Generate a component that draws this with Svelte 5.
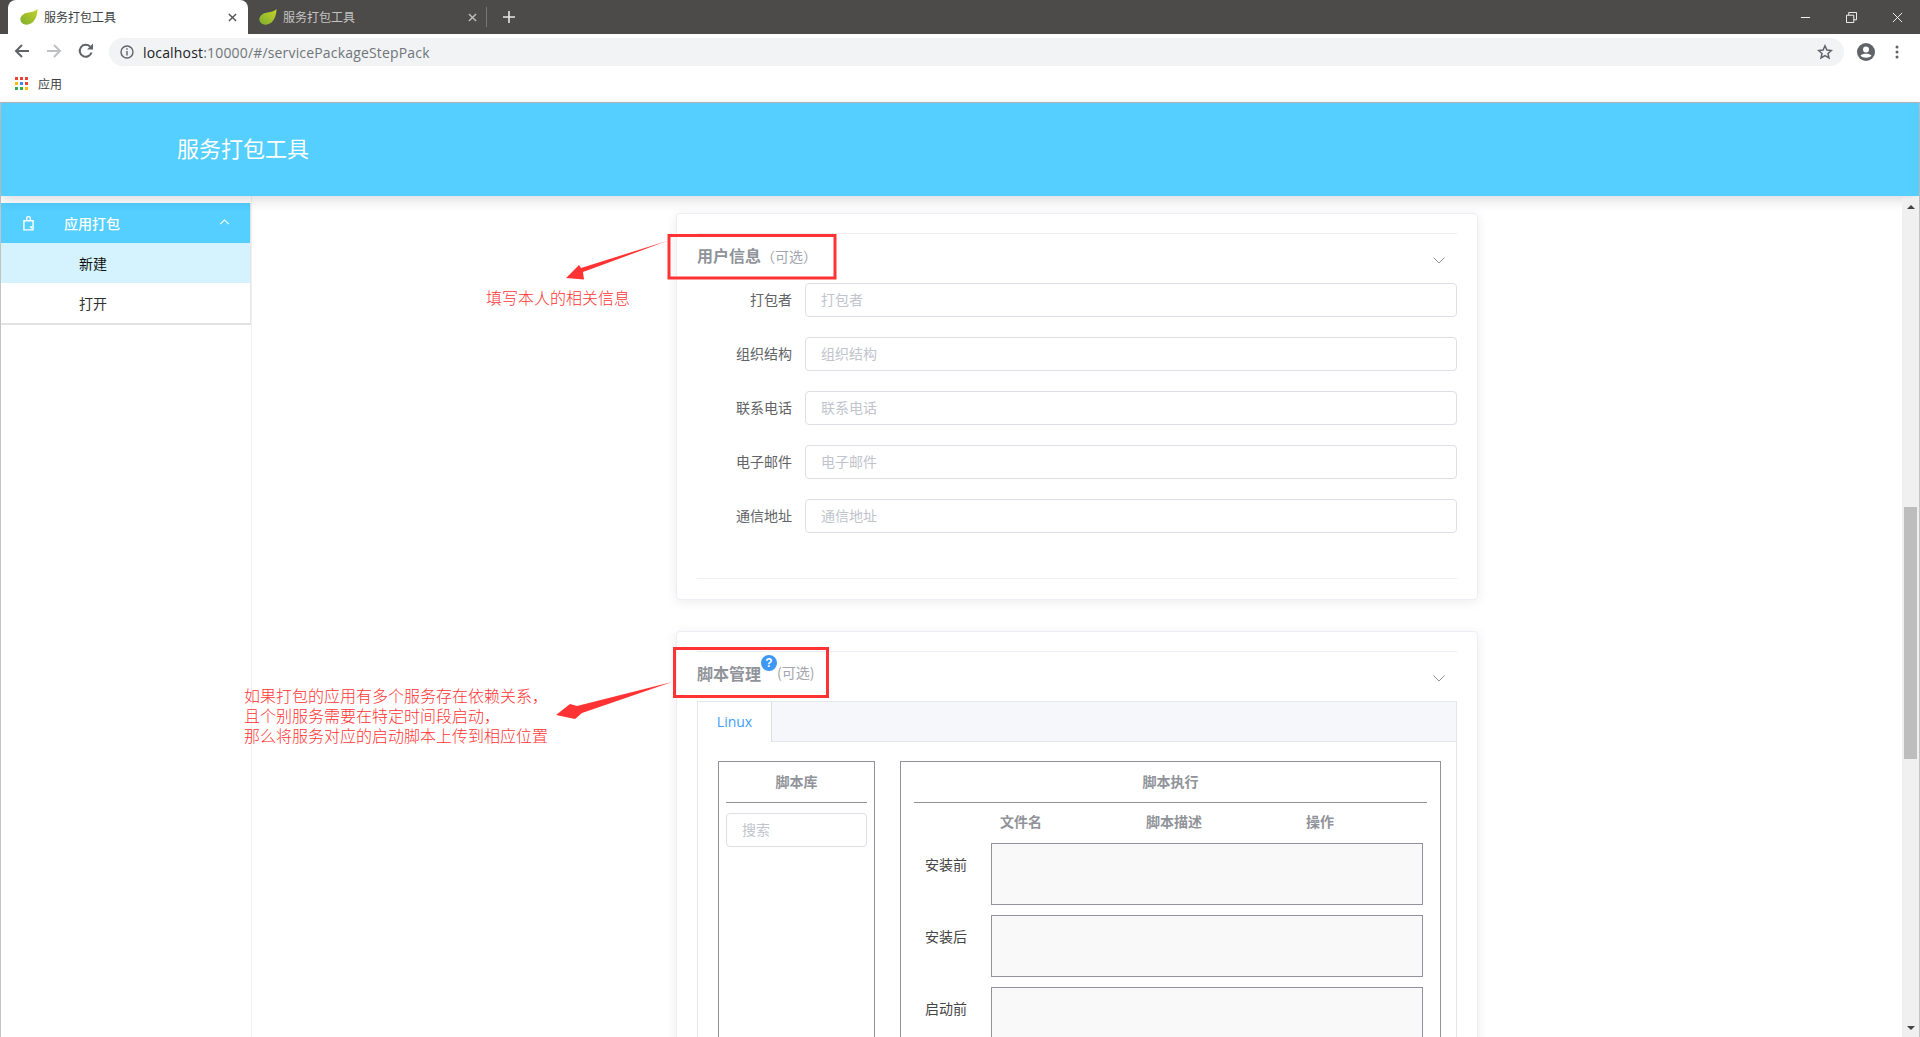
<script>
  const userFields = ['打包者', '组织结构', '联系电话', '电子邮件', '通信地址'];
  const stages = ['安装前', '安装后', '启动前'];
  const apps = ['#ea4335','#ea4335','#ea4335','#fbbc04','#4285f4','#ea4335','#34a853','#34a853','#fbbc04'];
</script>

<div class="window">
  <div class="tabstrip">
    <div class="tab active">
      <svg class="leaf" viewBox="0 0 18 16"><defs><linearGradient id="lf" x1="0" y1="1" x2="1" y2="0"><stop offset="0" stop-color="#7fae2e"/><stop offset="1" stop-color="#c4d32a"/></linearGradient></defs><path d="M17.500 0C13 5 4 1 .5 9c-1 4 3 7.500 7.500 6.500 6.500-1 9.500-8.500 9.500-15.500z" fill="url(#lf)"/></svg>
      <span class="tabtitle">服务打包工具</span>
      <svg class="tabx" viewBox="0 0 10 10"><path d="M1 1l8 8M9 1l-8 8" stroke="#555" stroke-width="1.6"/></svg>
    </div>
    <div class="tab second-tab">
      <svg class="leaf" viewBox="0 0 18 16"><path d="M17.500 0C13 5 4 1 .5 9c-1 4 3 7.500 7.500 6.500 6.500-1 9.500-8.500 9.500-15.500z" fill="url(#lf)"/></svg>
      <span class="tabtitle dim">服务打包工具</span>
      <svg class="tabx" viewBox="0 0 10 10"><path d="M1 1l8 8M9 1l-8 8" stroke="#bdbdbd" stroke-width="1.6"/></svg>
    </div>
    <div class="tabsep"></div>
    <svg class="plus" viewBox="0 0 12 12"><path d="M6 0v12M0 6h12" stroke="#e8e8e8" stroke-width="1.6"/></svg>
    <div class="winbtns">
      <svg viewBox="0 0 12 12"><path d="M1 6h10" stroke="#fff"/></svg>
      <svg viewBox="0 0 12 12"><path d="M.5 3.500h8v8h-8zM3 3.500V.5h8.500v8h-3" stroke="#fff" fill="none"/></svg>
      <svg viewBox="0 0 12 12"><path d="M1 1l10 10M11 1L1 11" stroke="#fff"/></svg>
    </div>
  </div>

  <div class="toolbar">
    <svg class="nav" viewBox="0 0 16 16"><path d="M15 8H2M8 2L2 8l6 6" stroke="#5f6368" stroke-width="2" fill="none"/></svg>
    <svg class="nav" viewBox="0 0 16 16"><path d="M1 8h13M8 2l6 6-6 6" stroke="#bdc1c6" stroke-width="2" fill="none"/></svg>
    <svg class="nav" viewBox="0 0 16 16"><path d="M13.500 9.500A6 6 0 1 1 12 3.500" stroke="#5f6368" stroke-width="2" fill="none"/><path d="M9 6.500h6V.5z" fill="#5f6368"/></svg>
    <div class="omnibox">
      <svg class="info" viewBox="0 0 14 14"><circle cx="7" cy="7" r="6" stroke="#5f6368" stroke-width="1.400" fill="none"/><path d="M7 6v4.500M7 3.300v1.500" stroke="#5f6368" stroke-width="1.400"/></svg>
      <span class="url"><span class="host">localhost</span>:10000/#/servicePackageStepPack</span>
      <svg class="star" viewBox="0 0 16 16"><path d="M8 1.800l1.900 4.200 4.500.5-3.400 3 1 4.500L8 11.700 4 14l1-4.500-3.400-3 4.500-.5z" stroke="#5f6368" stroke-width="1.500" fill="none"/></svg>
    </div>
    <svg class="profile" viewBox="0 0 18 18"><circle cx="9" cy="9" r="9" fill="#5f6368"/><circle cx="9" cy="6.500" r="3" fill="#fff"/><path d="M3.500 12.500c2-2.500 9-2.500 11 0-2 3-9 3-11 0z" fill="#fff"/></svg>
    <svg class="dots" viewBox="0 0 4 14"><circle cx="2" cy="2" r="1.500" fill="#5f6368"/><circle cx="2" cy="7" r="1.500" fill="#5f6368"/><circle cx="2" cy="12" r="1.500" fill="#5f6368"/></svg>
  </div>

  <div class="bookmarks">
    <div class="apps">{#each apps as c}<i style="background:{c}"></i>{/each}</div>
    <span>应用</span>
  </div>

  <div class="site">
    <header class="banner"><h1>服务打包工具</h1></header>
    <div class="layout">
      <aside class="sidebar">
        <nav class="menu">
          <div class="menuhead">
            <svg class="bag" viewBox="0 0 12 16"><path d="M1 5h10v10H1zM4 5V2.500a2 2 0 0 1 4 0V5" stroke="#fff" stroke-width="1.500" fill="none"/><path d="M7 11l2 3 2-3z" fill="#fff"/></svg>
            <span>应用打包</span>
            <svg class="up" viewBox="0 0 12 7"><path d="M1 6l5-5 5 5" stroke="#fff" stroke-width="1.200" fill="none"/></svg>
          </div>
          <div class="item selected">新建</div>
          <div class="item">打开</div>
        </nav>
      </aside>

      <main class="content">
        <section class="card first">
          <div class="collapse-head">
            <span class="ctitle">用户信息</span><span class="opt">（可选）</span>
            <svg class="chev" viewBox="0 0 12 7"><path d="M.5.5l5.500 5.500L11.500.5" stroke="#909399" fill="none"/></svg>
          </div>
          <form class="form">
            {#each userFields as f}
              <div class="row">
                <span class="lab">{f}</span>
                <div class="input"><span>{f}</span></div>
              </div>
            {/each}
          </form>
        </section>

        <section class="card">
          <div class="collapse-head">
            <span class="ctitle">脚本管理</span>
            <span class="help">?</span>
            <span class="opt second">(可选)</span>
            <svg class="chev" viewBox="0 0 12 7"><path d="M.5.5l5.500 5.500L11.500.5" stroke="#909399" fill="none"/></svg>
          </div>
          <div class="tabs">
            <div class="tabbar"><div class="tabitem">Linux</div></div>
            <div class="tabbody">
              <div class="lib">
                <div class="boxtitle">脚本库</div>
                <div class="input search"><span>搜索</span></div>
              </div>
              <div class="exec">
                <div class="boxtitle">脚本执行</div>
                <div class="cols">
                  <span class="c1">文件名</span><span class="c2">脚本描述</span><span class="c3">操作</span>
                </div>
                {#each stages as s}
                  <div class="stage">
                    <span>{s}</span>
                    <div class="drop"></div>
                  </div>
                {/each}
              </div>
            </div>
          </div>
        </section>
      </main>

      <div class="scrollbar">
        <svg viewBox="0 0 8 4"><path d="M0 4L4 0l4 4z" fill="#444"/></svg>
        <div class="track"><div class="thumb"></div></div>
        <svg viewBox="0 0 8 4"><path d="M0 0l4 4 4-4z" fill="#444"/></svg>
      </div>
    </div>
  </div>

  <svg class="marks" viewBox="0 0 1920 1037">
    <rect x="669" y="235.500" width="166" height="42.500" />
    <rect x="674.500" y="648.500" width="153" height="48" />
    <path class="arrow" d="M667 241L583 272L584 279.500L566 278L579 265L581 268Z"/>
    <path class="arrow" d="M672 682L582 713L575 719L556 715L570 704L577 706Z"/>
  </svg>
  <div class="note one">填写本人的相关信息</div>
  <div class="note two">
    <div>如果打包的应用有多个服务存在依赖关系，</div>
    <div>且个别服务需要在特定时间段启动，</div>
    <div>那么将服务对应的启动脚本上传到相应位置</div>
  </div>
</div>

<style>
  :global(body) { margin: 0; }
  .window {
    position: relative; height: 100vh; overflow: hidden; display: flex; flex-direction: column;
    background: #fff; color: #606266;
    font-family: "Noto Sans CJK SC", "Noto Sans", sans-serif; font-size: 14px;
  }
  .tabstrip { height: 34px; background: #4d4b49; display: flex; align-items: stretch; flex: none; padding-left: 8px; }
  .tab { width: 240px; display: flex; align-items: center; box-sizing: border-box; padding-left: 12px; padding-right: 11px; }
  .tab.second-tab { padding-left: 11px; }
  .tab.active { background: #fff; border-radius: 8px 8px 0 0; }
  .leaf { width: 18px; height: 16px; flex: none; margin-right: 6px; margin-bottom: 1px; }
  .tabtitle { font-size: 12px; color: #3c4043; flex: 1; padding-bottom: 2px; }
  .tabtitle.dim { color: #c4c4c4; }
  .tabx { width: 9px; height: 9px; }
  .tabsep { width: 1px; height: 20px; background: #777; align-self: center; margin-left: -2px; }
  .plus { width: 12px; height: 12px; align-self: center; margin-left: 16px; }
  .winbtns { margin-left: auto; display: flex; align-items: center; gap: 35px; padding-right: 17px; }
  .winbtns svg { width: 11px; height: 11px; }

  .toolbar { height: 34px; flex: none; display: flex; align-items: center; padding-left: 14px; }
  .nav { width: 16px; height: 16px; margin-right: 16px; }
  .omnibox { margin-left: 1px; width: 1735px; height: 28px; margin-top: 2px; background: #f1f3f4; border-radius: 14px; display: flex; align-items: center; box-sizing: border-box; padding-left: 11px; padding-right: 11px; }
  .info { width: 14px; height: 14px; margin-right: 9px; }
  .url { font-family: "Open Sans", sans-serif; font-size: 14px; color: #70757a; flex: 1; letter-spacing: 0.17px; }
  .host { color: #202124; }
  .star { width: 16px; height: 16px; }
  .toolbar > .nav:nth-child(3) { margin-right: 14px; }
  .profile { width: 18px; height: 18px; margin: 2px 0 0 13px; }
  .dots { width: 4px; height: 14px; margin: 2px 0 0 20px; }

  .bookmarks { height: 31px; padding-bottom: 3px; box-sizing: content-box; flex: none; display: flex; align-items: center; padding-left: 15px; border-bottom: 1px solid #b8b8b8; font-size: 12px; color: #3c4043; }
  .apps { width: 13px; display: grid; grid-template-columns: repeat(3, 3px); gap: 2px; margin-right: 10px; }
  .apps i { width: 3px; height: 3px; display: block; }

  .site { flex: 1; min-height: 0; display: flex; flex-direction: column; border-left: 1px solid #c4c4c4; border-right: 1px solid #c4c4c4; }
  .banner { height: 93px; box-sizing: border-box; padding-bottom: 5px; flex: none; background: #54cfff; box-shadow: 0 4px 12px rgba(0,0,0,.14); position: relative; z-index: 2; display: flex; align-items: center; padding-left: 176px; }
  h1 { margin: 0; font-size: 22px; font-weight: 400; color: #fff; }

  .layout { flex: 1; min-height: 0; display: flex; }
  .sidebar { width: 250px; flex: none; border-right: 1px solid #f0f0f2; padding-top: 7px; box-sizing: content-box; }
  .menu { border-bottom: 2px solid #e2e2e2; border-right: 1px solid #e6e6e6; }
  .menuhead { height: 40px; background: #54cfff; color: #fff; display: flex; align-items: center; position: relative; padding-left: 63px; font-weight: 500; }
  .bag { width: 11px; height: 15px; position: absolute; left: 22px; top: 13px; }
  .up { width: 11px; height: 6px; position: absolute; left: 218px; top: 16px; }
  .item { height: 40px; line-height: 40px; padding-left: 78px; color: #303133; }
  .item.selected { background: #d4f3ff; color: #111; }

  .content { flex: 1; padding: 17px 0 0 424px; box-sizing: border-box; min-width: 0; }
  .card { width: 802px; box-sizing: border-box; border: 1px solid #ebeef5; border-radius: 4px; box-shadow: 0 2px 12px rgba(0,0,0,.08); padding: 19px 20px 20px; background: #fff; margin-bottom: 31px; }
  .collapse-head { height: 49px; border-top: 1px solid #ebeef5; position: relative; display: flex; align-items: center; box-sizing: content-box; }
  .ctitle { font-size: 16px; font-weight: 700; color: #909399; margin-bottom: 8px; }
  .opt { font-size: 14px; color: #a3a6ad; margin-bottom: 6px; }
  .opt.second { margin-bottom: 9px; }
  .help { width: 16px; height: 16px; border-radius: 50%; background: #3e97f5; color: #fff; font-size: 12px; font-weight: 700; text-align: center; line-height: 16px; margin: -28px 0 0 0; font-family: "Liberation Sans", sans-serif; }
  .chev { width: 12px; height: 7px; position: absolute; right: 12px; top: 23px; }

  .form { padding-bottom: 25px; border-bottom: 1px solid #ebeef5; }
  .row { display: flex; align-items: center; height: 34px; margin-bottom: 20px; }
  .lab { width: 95px; text-align: right; margin-right: 13px; color: #606266; padding-bottom: 2px; }
  .input { flex: 1; height: 34px; box-sizing: border-box; border: 1px solid #dcdfe6; border-radius: 4px; display: flex; align-items: center; padding-left: 15px; padding-bottom: 2px; color: #c0c4cc; }

  .tabs { border: 1px solid #e4e7ed; border-bottom: 0; }
  .tabbar { height: 39px; background: #f5f7fa; border-bottom: 1px solid #e4e7ed; }
  .tabitem { width: 74px; height: 40px; box-sizing: border-box; background: #fff; border-right: 1px solid #dcdfe6; color: #409eff; text-align: center; line-height: 40px; font-family: "Open Sans", sans-serif; font-size: 14px; }
  .tabbody { display: flex; align-items: flex-start; gap: 25px; padding: 19px 15px 0 20px; }
  .lib { width: 157px; height: 500px; box-sizing: border-box; border: 1px solid #909399; padding: 0 7px; flex: none; }
  .boxtitle { height: 40px; line-height: 38px; border-bottom: 1px solid #909399; text-align: center; font-weight: 700; color: #909399; }
  .search { flex: none; margin-top: 10px; }
  .exec { width: 541px; height: 500px; box-sizing: border-box; border: 1px solid #909399; padding: 0 13px; flex: none; }
  .cols { height: 40px; position: relative; font-weight: 700; color: #909399; }
  .cols span { position: absolute; top: 8px; }
  .c1 { left: 86px; } .c2 { left: 232px; } .c3 { left: 392px; }
  .stage { display: flex; margin-bottom: 10px; padding-left: 11px; color: #444; }
  .stage span { width: 66px; flex: none; padding-top: 11px; line-height: 20px; }
  .drop { width: 432px; height: 62px; box-sizing: border-box; border: 1px solid #909399; background: #f9f9f9; }

  .scrollbar { width: 17px; flex: none; background: #f0f0f0; margin-top: 2px; display: flex; flex-direction: column; align-items: center; position: relative; z-index: 3; }
  .scrollbar svg { width: 8px; height: 4px; margin: 7px 0; flex: none; }
  .track { flex: 1; width: 100%; padding-top: 291px; box-sizing: border-box; }
  .thumb { height: 252px; width: 13px; margin: 0 auto; background: #bdbdbd; }

  .marks { position: absolute; left: 0; top: 0; width: 1920px; height: 1037px; pointer-events: none; z-index: 5; }
  .marks rect { fill: none; stroke: #ff3333; stroke-width: 3; }
  .arrow { fill: #ff3333; }
  .note { position: absolute; z-index: 5; color: #ff3333; font-size: 16px; font-weight: 300; line-height: 20px; white-space: nowrap; }
  .note.one { left: 486px; top: 287px; }
  .note.two { left: 244px; top: 685px; }
</style>
